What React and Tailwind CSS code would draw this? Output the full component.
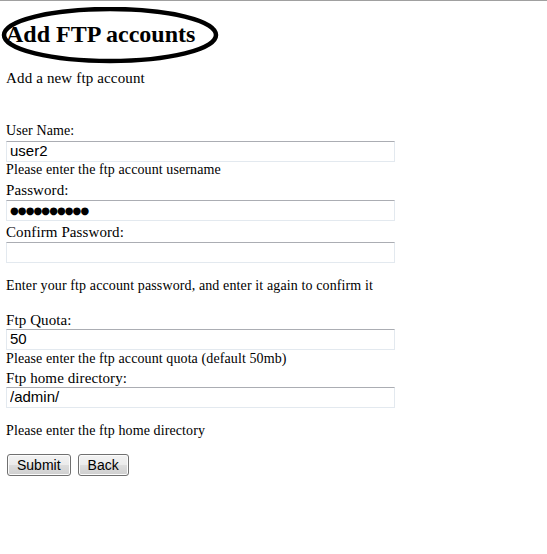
import React from "react";

function Field({ value, dots }) {
  return (
    <input
      type="text"
      readOnly
      value={value}
      className={
        "block w-[389px] h-[21px] border border-[#e3e9ef] border-t-[#abadb3] bg-white px-[3px] py-0 text-black outline-none " +
        (dots
          ? "text-[10px] font-['DejaVu_Sans',sans-serif] tracking-[-0.9px]"
          : "text-[15px] font-['Liberation_Sans',Arial,sans-serif]")
      }
    />
  );
}

function Btn({ children }) {
  return (
    <button
      type="button"
      className="h-[22px] px-[9px] rounded-[3px] border border-[#707070] bg-[linear-gradient(#f2f2f2,#ebebeb_50%,#dddddd_50%,#cfcfcf)] shadow-[inset_0_0_0_1px_#fcfcfc] text-[14px] leading-[18px] text-black font-['Liberation_Sans',Arial,sans-serif]"
    >
      {children}
    </button>
  );
}

export default function App() {
  return (
    <div className="min-h-[554px] w-[547px] bg-white text-black font-['Liberation_Serif','Times_New_Roman',serif] border-t border-[#a0a0a0]">
      <div className="pl-[6px]">
        <div className="relative mt-[19px]">
          <h1 className="relative text-[24px] leading-[28px] font-bold">Add FTP accounts</h1>
          <svg
            className="absolute left-[-6px] top-[-13px] pointer-events-none"
            width="222"
            height="60"
            viewBox="0 0 222 60"
          >
            <ellipse cx="110" cy="28" rx="106" ry="26" fill="none" stroke="black" strokeWidth="4.5" />
          </svg>
        </div>
        <p className="mt-[21px] text-[15px] leading-[18px] tracking-[0.15px]">Add a new ftp account</p>

        <div className="mt-[36px] text-[14px] leading-[16px] tracking-[0.1px]">User Name:</div>
        <div className="mt-[2px]">
          <Field value="user2" />
        </div>
        <div className="text-[14px] leading-[16px] tracking-[0.1px]">Please enter the ftp account username</div>

        <div className="mt-[3px] text-[15px] leading-[18px] tracking-[0.1px]">Password:</div>
        <div className="mt-[1px]">
          <Field value={"●●●●●●●●●●"} dots />
        </div>
        <div className="mt-[2px] text-[15px] leading-[18px] tracking-[0.1px]">Confirm Password:</div>
        <div className="mt-[1px]">
          <Field value="" />
        </div>

        <div className="mt-[15px] text-[14px] leading-[16px] tracking-[0.12px]">
          Enter your ftp account password, and enter it again to confirm it
        </div>

        <div className="mt-[17px] text-[15px] leading-[18px] tracking-[0.1px]">Ftp Quota:</div>
        <Field value="50" />
        <div className="mt-[1px] text-[14px] leading-[16px] tracking-[0.1px]">Please enter the ftp account quota (default 50mb)</div>

        <div className="mt-[2px] text-[15px] leading-[18px] tracking-[0.1px]">Ftp home directory:</div>
        <Field value="/admin/" />

        <div className="mt-[15px] text-[14px] leading-[16px] tracking-[0.1px]">Please enter the ftp home directory</div>

        <div className="mt-[15px] ml-[1px] flex gap-[7px]">
          <Btn>Submit</Btn>
          <Btn>Back</Btn>
        </div>
      </div>
    </div>
  );
}
